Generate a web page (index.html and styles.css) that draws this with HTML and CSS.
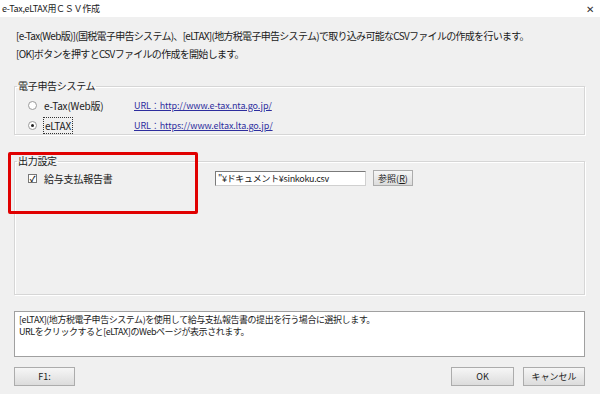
FILE: index.html
```html
<!DOCTYPE html>
<html lang="ja">
<head>
<meta charset="utf-8">
<title>e-Tax,eLTAX用ＣＳＶ作成</title>
<link rel="stylesheet" href="styles.css">
</head>
<body>
<div class="window">
  <div class="titlebar">
    <span class="title">e-Tax,eLTAX用ＣＳＶ作成</span>
    <span class="close">✕</span>
  </div>
  <div class="content">
    <p class="intro first">[e-Tax(Web版)](国税電子申告システム)、[eLTAX](地方税電子申告システム)で取り込み可能なCSVファイルの作成を行います。</p>
    <p class="intro">[OK]ボタンを押すとCSVファイルの作成を開始します。</p>

    <fieldset class="group sys">
      <legend>電子申告システム</legend>
      <div class="row">
        <label class="opt"><span class="radio"></span><span>e-Tax(Web版)</span></label>
        <a class="link">URL：http://www.e-tax.nta.go.jp/</a>
      </div>
      <div class="row">
        <label class="opt"><span class="radio on"></span><span class="focus">eLTAX</span></label>
        <a class="link">URL：https://www.eltax.lta.go.jp/</a>
      </div>
    </fieldset>

    <fieldset class="group out">
      <legend>出力設定</legend>
      <div class="row outrow">
        <label class="opt"><span class="check">✓</span><span>給与支払報告書</span></label>
        <div class="file">
          <span class="input">"¥ドキュメント¥sinkoku.csv</span>
          <span class="btn browse">参照(<u>R</u>)</span>
        </div>
      </div>
    </fieldset>

    <div class="msg">
      <div class="msgline">[eLTAX](地方税電子申告システム)を使用して給与支払報告書の提出を行う場合に選択します。</div>
      <div class="msgline">URLをクリックすると[eLTAX]のWebページが表示されます。</div>
    </div>

    <div class="buttons">
      <span class="btn f1">F1:</span>
      <span class="spacer"></span>
      <span class="btn ok">OK</span>
      <span class="btn cancel">キャンセル</span>
    </div>
  </div>
  <div class="highlight"></div>
</div>
</body>
</html>
```

FILE: styles.css
```css
* { box-sizing: border-box; }
html, body { margin: 0; padding: 0; }
body {
  width: 600px;
  height: 394px;
  background: #f0f0f0;
  font-family: "Noto Sans CJK JP", "Noto Sans", sans-serif;
  font-size: 10px;
  color: #1a1a1a;
  overflow: hidden;
}
.window { position: relative; width: 600px; height: 394px; }
.titlebar {
  height: 17px;
  background: #ffffff;
  display: flex;
  align-items: center;
  justify-content: space-between;
  padding: 0 6px 0 2px;
  font-size: 9px;
  letter-spacing: -0.3px;
  line-height: 17px;
}
.close { font-size: 10px; color: #333; }
.content { padding: 0 15px 0 14px; }
.intro {
  margin: 0 0 0 2px;
  line-height: 18px;
  font-size: 10px;
  letter-spacing: -0.7px;
  white-space: nowrap;
}
.intro.first { margin-top: 10px; }
.group {
  margin: 0;
  padding: 0;
  border: 1px solid #d6d6d6;
  box-shadow: inset 1px 1px 0 #ffffff, 1px 1px 0 #ffffff;
}
.group legend {
  padding: 0 1px;
  margin-left: 2px;
  font-size: 10px;
  line-height: 12px;
  letter-spacing: -0.3px;
}
.sys { margin-top: 17px; height: 55px; padding-top: 3px; }
.row { display: flex; align-items: center; height: 20px; padding-left: 13px; }
.opt { display: flex; align-items: center; width: 106px; letter-spacing: -0.2px; }
.radio {
  width: 9px; height: 9px; border-radius: 50%;
  border: 1px solid #9a9a9a; background: #fff; margin-right: 7px;
  position: relative;
}
.radio.on::after {
  content: ""; position: absolute; left: 2px; top: 2px; width: 3px; height: 3px;
  border-radius: 50%; background: #222;
}
.focus { outline: 1px dotted #333; outline-offset: 0; padding: 0 1px; }
.link { color: #2e2e9e; text-decoration: underline; font-size: 9px; letter-spacing: -0.1px; }
.out { margin-top: 20px; height: 140px; padding-top: 2px; }
.outrow { height: 18px; }
.outrow .opt { width: 187px; }
.check {
  width: 9px; height: 9px; border: 1px solid #777; background: #fff;
  margin-right: 7px; font-size: 8px; line-height: 7px; text-align: center;
  font-weight: bold;
}
.file { display: flex; align-items: center; }
.input {
  width: 151px; height: 15px; background: #fff;
  border: 1px solid #7a7a7a; border-right-color: #d0d0d0; border-bottom-color: #d0d0d0;
  font-size: 9px; line-height: 13px; padding-left: 2px; white-space: nowrap; overflow: hidden;
  letter-spacing: -0.3px;
}
.btn {
  display: flex; align-items: center; justify-content: center;
  border: 1px solid #acacac;
  background: linear-gradient(#f6f6f6, #dcdcdc);
  font-size: 9px;
  height: 19px;
}
.browse { width: 40px; height: 16px; margin-left: 7px; }
.msg {
  margin-top: 16px;
  height: 46px;
  background: #fff;
  border: 1px solid #a0a0a0;
  padding: 2px 4px;
}
.msgline {
  font-size: 9px;
  line-height: 12px;
  height: 12px;
  letter-spacing: -0.45px;
  white-space: nowrap;
}
.buttons { display: flex; margin-top: 10px; }
.spacer { flex: 1; }
.f1 { width: 61px; }
.ok { width: 63px; }
.cancel { width: 62px; margin-left: 9px; }
.highlight {
  position: absolute;
  left: 8px; top: 152px; width: 190px; height: 62px;
  border: 3px solid #e00000;
  border-radius: 2px;
  pointer-events: none;
}
```
